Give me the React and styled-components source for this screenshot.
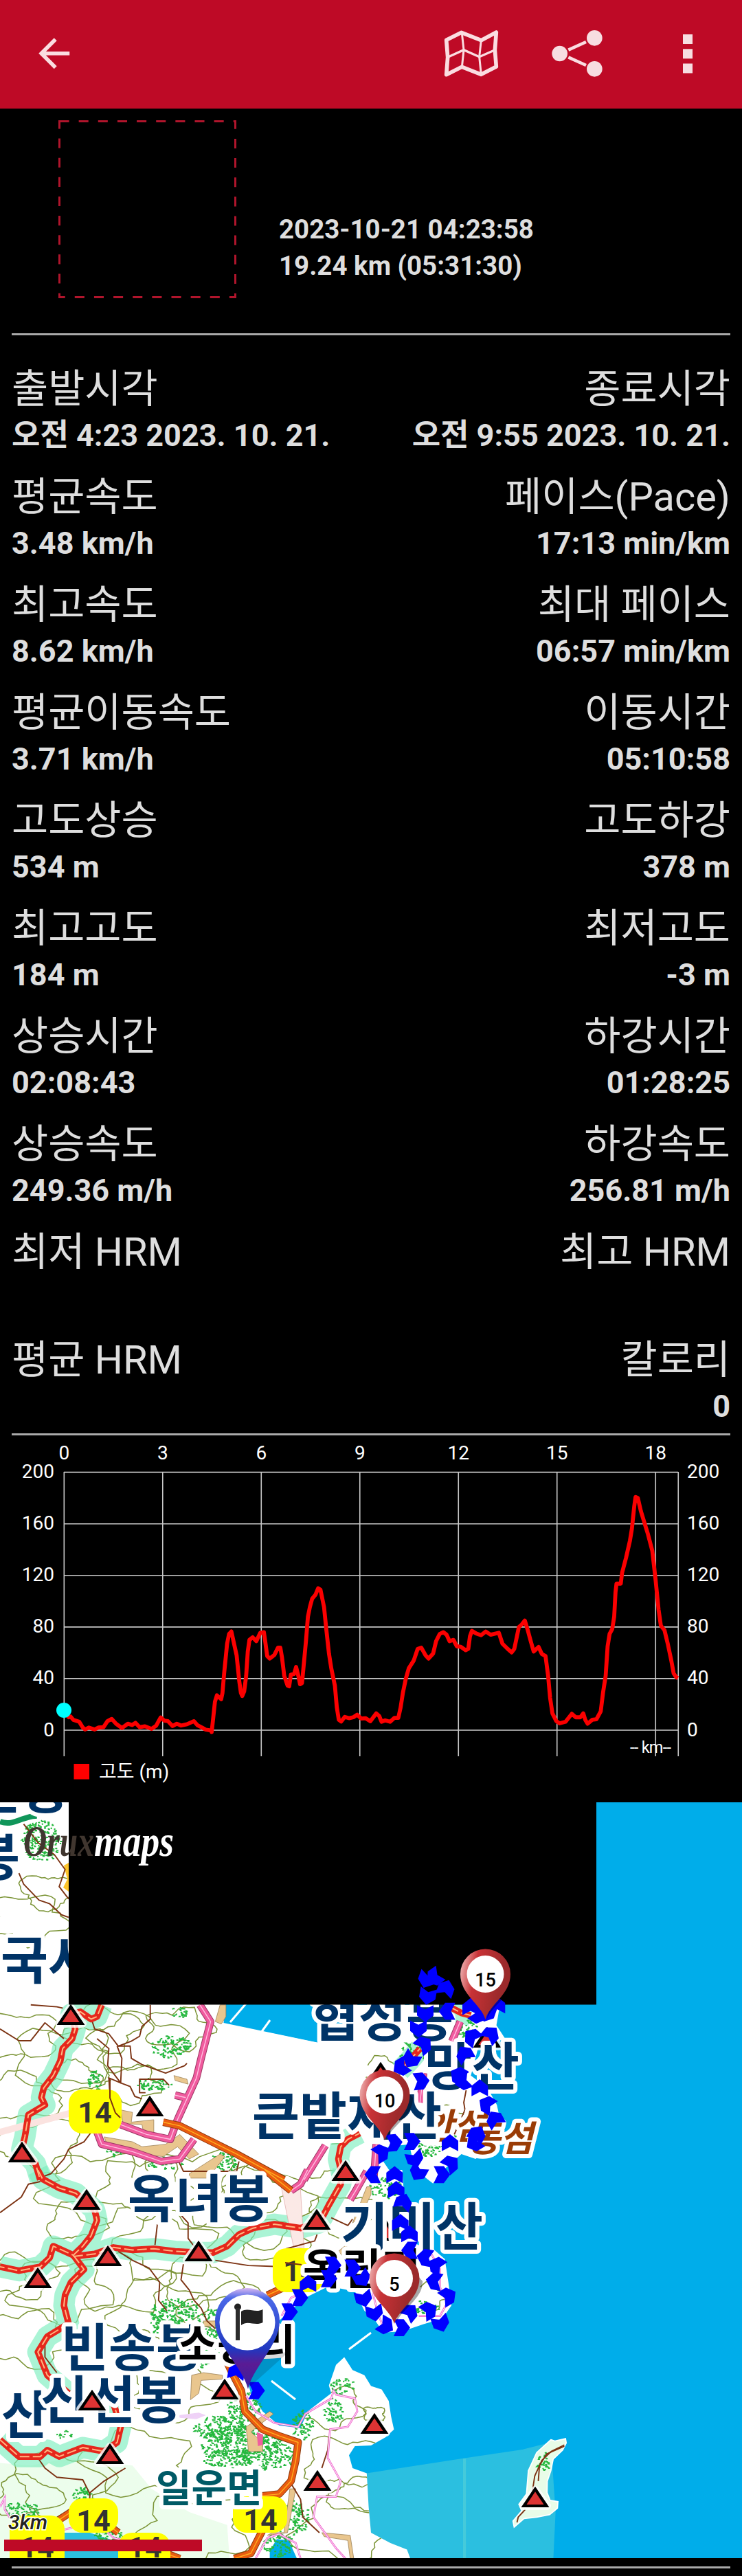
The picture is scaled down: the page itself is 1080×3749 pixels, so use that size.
import React from "react";
import styled, { createGlobalStyle } from "styled-components";

const GlobalStyle = createGlobalStyle`
  body {
    margin: 0;
    background-color: #000;
    font-family: Roboto, "Noto Sans CJK KR", sans-serif;
  }
`;

const Page = styled.div`
  width: 1080px;
  height: 3749px;
  overflow: hidden;
  background-color: #000;
  color: #dedede;
`;

const AppBar = styled.header`
  display: flex;
  align-items: center;
  box-sizing: border-box;
  height: 158px;
  padding: 0 72px 2px 45px;
  background-color: #be0a26;
`;

const Actions = styled.div`
  display: flex;
  align-items: center;
  gap: 77px;
  margin-left: auto;
`;

const IconButton = styled.button`
  display: flex;
  padding: 0;
  border: none;
  background: none;
  margin-right: ${(props) => props.$push || 0}px;
`;

const Summary = styled.section`
  display: flex;
  align-items: flex-end;
  box-sizing: border-box;
  height: 327px;
  padding: 0 85px 51px;
`;

const SummaryText = styled.p`
  margin: 0 0 22px 62px;
  font-size: 38.5px;
  font-weight: 700;
  line-height: 53px;
  height: 105px;
`;

const Divider = styled.hr`
  height: 3px;
  margin: 0 17px;
  border: none;
  background-color: #a9a9a9;
`;

const Stats = styled.section`
  display: flex;
  flex-direction: column;
  gap: 21px;
  padding: 45px 17px 4px;
`;

const StatRow = styled.div`
  display: flex;
  justify-content: space-between;
  height: 136px;
`;

const Stat = styled.div`
  text-align: ${(props) => (props.$end ? "right" : "left")};
`;

const StatLabel = styled.div`
  font-size: 57.8px;
  line-height: 66px;
`;

const StatValue = styled.div`
  font-size: 45px;
  font-weight: 700;
  line-height: 70px;
`;

const Chart = styled.svg`
  display: block;
  width: 1080px;
  height: 534px;
`;

const AxisText = styled.text`
  fill: #fff;
  font-size: ${(props) => props.$size || 28}px;
  text-anchor: ${(props) => props.$anchor || "start"};
`;

const Map = styled.svg`
  display: block;
  width: 1080px;
  height: 1100px;
`;

const PlaceName = styled.text`
  fill: ${(props) => props.$color || "#003366"};
  stroke: #fff;
  stroke-width: 12px;
  stroke-linejoin: round;
  paint-order: stroke;
  font-family: "Noto Sans CJK KR", sans-serif;
  font-weight: 700;
  font-size: ${(props) => props.$size || 75}px;
  font-style: ${(props) => (props.$italic ? "italic" : "normal")};
  text-anchor: ${(props) => props.$anchor || "start"};
`;

const RoadNumber = styled.text`
  fill: #333;
  font-size: 43px;
  font-weight: 700;
  text-anchor: middle;
`;

const PinText = styled.text`
  fill: #000;
  font-size: 27px;
  font-weight: 500;
  text-anchor: middle;
`;

const ScaleText = styled.text`
  fill: #222;
  stroke: #fff;
  stroke-width: 3px;
  paint-order: stroke;
  font-size: 30px;
  font-style: italic;
  font-weight: 500;
`;

const Logo = styled.text`
  font-family: "Liberation Serif", serif;
  font-size: 64px;
  font-weight: 700;
  font-style: italic;
`;

const Footer = styled.footer`
  padding-top: 12px;
`;

const STATS = [
  ["출발시각", "오전 4:23 2023. 10. 21.", "종료시각", "오전 9:55 2023. 10. 21."],
  ["평균속도", "3.48 km/h", "페이스(Pace)", "17:13 min/km"],
  ["최고속도", "8.62 km/h", "최대 페이스", "06:57 min/km"],
  ["평균이동속도", "3.71 km/h", "이동시간", "05:10:58"],
  ["고도상승", "534 m", "고도하강", "378 m"],
  ["최고고도", "184 m", "최저고도", "-3 m"],
  ["상승시간", "02:08:43", "하강시간", "01:28:25"],
  ["상승속도", "249.36 m/h", "하강속도", "256.81 m/h"],
  ["최저 HRM", "", "최고 HRM", ""],
  ["평균 HRM", "", "칼로리", "0"],
];

// distance (km), altitude (m)
const ALTITUDE = [
  [0, 14.6], [0.14, 10], [0.2, 10.5], [0.28, 8], [0.46, 6.5], [0.57, 2], [0.64, 0.5], [0.75, 2],
  [0.93, 0.5], [1.04, 2], [1.2, 2.3], [1.32, 7], [1.45, 8.7], [1.58, 5], [1.76, 1.7], [1.94, 5],
  [2.07, 4], [2.17, 5.7], [2.3, 2.3], [2.46, 3], [2.66, 1], [2.8, 3.4], [2.94, 9.9], [3.05, 7.4],
  [3.16, 7], [3.3, 3.2], [3.43, 5], [3.56, 3.6], [3.74, 4.6], [3.95, 7], [4.06, 3.8], [4.2, 2],
  [4.31, 0.4], [4.46, -0.2], [4.49, -1.5], [4.54, 10], [4.59, 22], [4.65, 27], [4.78, 24],
  [4.82, 29], [4.87, 44], [4.96, 67], [5.02, 74.6], [5.09, 76.5], [5.25, 58], [5.33, 38],
  [5.38, 29], [5.42, 26.5], [5.48, 30], [5.54, 42], [5.59, 61], [5.64, 70], [5.74, 72],
  [5.85, 69], [5.97, 75.5], [6.08, 76], [6.13, 67], [6.18, 57.5], [6.26, 55.5], [6.4, 58.4],
  [6.51, 64], [6.58, 64], [6.63, 56.5], [6.7, 42], [6.8, 34.6], [6.85, 34], [6.9, 43],
  [7, 43.6], [7.06, 49], [7.13, 42], [7.18, 35.6], [7.24, 36.5], [7.29, 50], [7.36, 69],
  [7.42, 88], [7.48, 95.5], [7.55, 102], [7.65, 105], [7.73, 110], [7.8, 109], [7.91, 95.5],
  [7.98, 78], [8.06, 59.4], [8.13, 48], [8.24, 34.6], [8.3, 17.5], [8.36, 8], [8.43, 6.7],
  [8.54, 10.3], [8.67, 9.3], [8.8, 10], [8.92, 12], [9.04, 9], [9.17, 9.3], [9.32, 6.9],
  [9.5, 13], [9.59, 11], [9.66, 6.5], [9.77, 7.6], [9.92, 6.5], [10.05, 9.5], [10.17, 9.5],
  [10.24, 17.5], [10.31, 29], [10.4, 40], [10.49, 48], [10.64, 54], [10.76, 63], [10.87, 64],
  [11, 58], [11.09, 55.5], [11.23, 59.4], [11.32, 69], [11.43, 74.6], [11.54, 76], [11.64, 74],
  [11.73, 69], [11.85, 70], [11.95, 65], [12.07, 64.7], [12.22, 62], [12.3, 63], [12.35, 72.7],
  [12.41, 77], [12.54, 75], [12.69, 73.6], [12.83, 76.5], [12.98, 74], [13.23, 75.5],
  [13.34, 67], [13.5, 63], [13.62, 60.3], [13.7, 63], [13.84, 80], [13.93, 82], [14.02, 85],
  [14.1, 78.4], [14.2, 69], [14.29, 61], [14.44, 64.5], [14.54, 59], [14.65, 57.5],
  [14.73, 42], [14.79, 25], [14.86, 13], [14.98, 7], [15.08, 5.3], [15.26, 6.5], [15.45, 12.7],
  [15.57, 10], [15.71, 10], [15.8, 13], [15.86, 8], [15.93, 5], [16.07, 8], [16.2, 8.4],
  [16.33, 14.6], [16.4, 29], [16.48, 42], [16.54, 65], [16.6, 74.6], [16.68, 78.4], [16.74, 88],
  [16.78, 107], [16.81, 113.6], [16.94, 113.6], [16.98, 122], [17.1, 133.6], [17.22, 147],
  [17.28, 156.4], [17.35, 173.5], [17.39, 180.8], [17.46, 180], [17.55, 170], [17.76, 152.6],
  [17.9, 139], [18, 116.5], [18.09, 93.6], [18.16, 81], [18.27, 77.5], [18.37, 67],
  [18.48, 53.7], [18.55, 44], [18.63, 41], [18.68, 40.3],
];

const kmToX = (km) => 93.3 + km * 47.83;
const mToY = (m) => 429 - m * 1.877;

// The map is drawn from two sheets, each with its own grid
const NORTH = "translate(0 -13) scale(0.3444 0.3571)";
const SOUTH = "translate(0 537) scale(0.3444 0.3757)";
const TRACK = "translate(380 237) scale(0.3333 0.3444)";

const LAND_NORTH =
  "M0 0H955V862L945 935 1340 1015 1450 1000 1450 862 2120 862 2108 890 2098 945 2135 1000 2020 1040 1990 1150 2060 1200 2100 1270 2118 1350 2080 1440 2010 1490 1950 1470 1880 1530 1830 1590 1790 1560 1745 1500 1730 1430 1640 1440 1620 1500 1690 1600H0Z";
const LAND_SOUTH =
  "M0-5H1700L1710 120 1740 280 1830 300 1880 340 1895 430 1908 520 1870 570 1790 592 1700 620 1620 625 1580 570 1540 540 1500 465 1390 445 1290 490 1190 570 1100 640 1040 790 1060 860 1110 930 1180 985 1270 995 1300 930 1400 860 1390 830 1420 750 1455 720 1490 770 1540 790 1568 832 1613 845 1643 890 1653 950 1665 1000 1630 1030 1568 1062 1500 1065 1475 1100 1490 1150 1550 1170 1558 1300 1568 1400 1650 1440 1720 1465 1738 1510H0Z";

const RIDGES = {
  north: [
    "M430 862L410 910 385 920 340 890 300 900 318 960 305 1000 265 1040 255 1090 225 1150 185 1200 175 1240 190 1270 120 1310 105 1400 92 1450 150 1510 170 1575",
    "M1450 1575L1430 1490 1440 1440 1470 1410 1520 1385",
    "M1900 870L1950 895 1990 905",
    "M1690 1130L1730 1090 1775 1040",
  ],
  south: [
    "M160-5L180 30 250 65 320 85 400 150 410 190 385 250 350 290 310 325 225 290 210 335 170 370 80 385 0 370",
    "M310 325L355 380 300 430 275 480 270 520 290 590 200 640 160 700 200 790 290 860",
    "M310 330L400 320 480 295 560 305 650 300 740 310 840 315 900 315 960 290 1010 245 1070 220 1160 205 1270 220 1350 200 1390 130 1440 50 1450-5",
    "M0 1040L80 1105 170 1105 200 1080 250 1105 350 1070 440 1085 495 1050 510 990 480 900",
  ],
};

const PINK_ROADS = {
  north: [
    "M845 862L890 930 850 1080 830 1160 750 1330 720 1410 620 1390 510 1350",
    "M410 1380L430 1430 560 1460 680 1500 760 1490 820 1410",
    "M740 1230L785 1240",
    "M1375 1435L1285 1575",
    "M1910 1010L1945 930",
    "M1580 1568L1590 1430",
    "M1790 1140L1775 1260",
  ],
  south: ["M1300-5L1270 50 1230 75", "M1480 110L1500 80 1550 0"],
};

const ORANGE_ROADS = {
  north: ["M690 1340L760 1355 1000 1470 1200 1575"],
  south: [
    "M1120-5L1230 75",
    "M1130 480L1200 450",
    "M950 720L980 780 1020 850 1035 930 1110 1000 1180 1025 1260 1050 1250 1120 1230 1200 1180 1250 1060 1262",
    "M1110 1390L1060 1480 990 1500",
    "M250 1350L300 1320 400 1330 500 1400",
    "M700 1480L760 1500",
  ],
};

const TRAILS = {
  north: [
    "M100 125L160 200 230 250 275 310 250 380 290 430",
    "M80 325L100 370 165 435 210 450 260 495 290 505",
    "M130 862L240 870 265 875",
    "M0 960L80 1008 130 1008 190 935 270 1000",
    "M390 930L400 960 460 980 500 1030 555 1010 590 990 600 950 635 920 635 862",
    "M410 1000L460 1040 455 1110 510 1180 460 1160 465 1240 480 1300 505 1325",
    "M495 1030L515 1080 510 1180 550 1195 570 1235 600 1245",
    "M500 1030L550 1030 555 1080 600 1105 700 1140 780 1110 790 1100",
    "M715 1190L690 1165 590 1165 590 1220 615 1220",
    "M390 1375L355 1420 290 1450 270 1490 215 1550 165 1568",
    "M755 1500L775 1540 1000 1540 1010 1500",
    "M1970 1210L1960 1260 1965 1290 1920 1390",
    "M1965 1300L1990 1360 1950 1380 1955 1430",
  ],
  south: [
    "M0 160L90 100 120 50 170 40",
    "M665 205L655 285",
    "M765 170L795 200 795 260 820 290",
    "M500 310L560 345 630 375 675 430 670 500 705 540",
    "M775 360L765 420 800 460 820 500 850 530 875 580 910 610",
    "M910 345L1050 365 1200 370 1270 380",
    "M1340 245L1330 270 1210 300 1205 370",
    "M1400 180L1470 210 1490 185",
    "M190 660L190 720 240 780",
    "M160 1110L190 1150 240 1185 350 1195 380 1250 375 1340",
    "M380 1245L440 1200 530 1150",
    "M1390 1030L1385 1080 1360 1150",
    "M1230 1210L1270 1270 1280 1340 1350 1400",
    "M2385 1060L2330 1085 2290 1120 2260 1180 2250 1240",
    "M2385 1065L2310 1095 2280 1140 2275 1200",
    "M2220 1310L2190 1340 2185 1360",
  ],
};

// narrow lanes drawn in pink without a casing
const LANES = [
  "M1040 870L1080 930 1160 975 1260 990 1290 940 1400 880 1410 850 1420 865 1500 880 1510 930 1470 990 1395 1000 1385 1110 1440 1200 1420 1260 1340 1260 1325 1340 1420 1460 1460 1500",
  "M180 1410L240 1395 330 1375 430 1378 480 1420 600 1450 660 1500",
  "M1080 1500L1130 1420 1180 1405 1250 1440 1270 1500",
  "M0 1300L20 1265 20 1310 40 1340",
  "M1190 560L1230 490 1300 460",
  "M1810 300L1860 380 1860 450 1890 510 1860 560 1770 560",
  "M1575 470L1600 560 1620 600",
];

const CONTOURS = [
  [40, 170, 48], [70, 130, 34], [30, 340, 46], [90, 370, 60], [150, 330, 44], [200, 350, 56],
  [260, 330, 40], [30, 430, 46], [110, 400, 30], [60, 500, 50], [140, 560, 66],
  [110, 610, 36], [210, 560, 56], [280, 560, 68], [370, 590, 70], [240, 650, 60],
  [180, 700, 56], [90, 710, 60], [30, 690, 42], [40, 780, 56], [230, 740, 58],
  [290, 700, 46], [330, 740, 52], [400, 640, 40], [250, 860, 50],
  [200, 960, 64], [90, 990, 60], [40, 1010, 40], [280, 1060, 66],
  [480, 880, 40], [500, 960, 48], [500, 1060, 60], [520, 1010, 34],
  [500, 600, 40], [460, 520, 34], [380, 560, 42], [555, 390, 26], [545, 890, 14],
  [650, 460, 22], [620, 720, 26], [190, 410, 36],
];

const WOODS = [
  [60, 55, 28, 30], [250, 355, 30, 16], [225, 410, 26, 10], [140, 405, 12, 16], [262, 305, 14, 8],
  [170, 505, 16, 10], [240, 525, 26, 8], [330, 520, 22, 14], [255, 740, 36, 18], [240, 760, 22, 16],
  [310, 770, 26, 34], [290, 800, 18, 24], [355, 880, 24, 22], [350, 930, 60, 26], [320, 910, 40, 18],
  [390, 950, 40, 20], [330, 955, 34, 14], [440, 905, 16, 22], [498, 850, 18, 12], [485, 885, 14, 18],
  [30, 1030, 26, 12], [120, 1010, 14, 16], [430, 1040, 20, 24], [405, 1080, 22, 18], [95, 920, 12, 6],
  [560, 560, 24, 14], [625, 500, 18, 14], [650, 490, 14, 10], [680, 330, 14, 14], [600, 365, 18, 16],
  [620, 735, 20, 10], [25, 240, 18, 10], [160, 1070, 24, 12], [790, 960, 10, 14],
];

const BUILDINGS = {
  north: [
    "M735 1150L790 1165 795 1185 740 1170Z",
    "M510 1290L560 1300 555 1340 650 1330 650 1400 610 1400 600 1350 520 1345Z",
    "M440 1400L560 1420 600 1440 700 1430 760 1390 840 1470 800 1490 750 1440 690 1480 560 1470 460 1450Z",
    "M800 1550L930 1470 950 1480 880 1568 800 1568Z",
    "M930 862L955 862 955 910 935 940 910 930Z",
  ],
  south: [
    "M860 580L910 580 910 600 860 600Z",
    "M810 790L860 780 940 790 940 805 850 810 840 860 805 885Z",
    "M1040 990L1140 930 1155 940 1060 1010 1110 1050 1110 1085 1050 1085Z",
    "M1225 1230L1250 1230 1215 1400 1130 1410 1150 1400 1200 1400Z",
    "M1360 1400L1480 1410 1495 1500 1480 1500 1470 1430 1370 1415Z",
    "M1490 200L1550 60 1568 60 1568 90 1520 180Z",
    "M1430 310L1470 280 1450 330Z",
  ],
};

const SHIELDS = [
  { x: 100, y: 418, w: 77, h: 64, tx: 138, ty: 466 },
  { x: 397, y: 649, w: 74, h: 64, tx: 437, ty: 697 },
  { x: 14, y: 1038, w: 80, h: 80, tx: 54, ty: 1099 },
  { x: 172, y: 1063, w: 76, h: 60, tx: 211, ty: 1099 },
  { x: 100, y: 1013, w: 72, h: 50, tx: 136, ty: 1060 },
  { x: 339, y: 1010, w: 79, h: 53, tx: 379, ty: 1059 },
];

const PEAKS = [
  [103, 324], [218, 457], [32, 524], [126, 593], [157, 675], [289, 668], [55, 707], [461, 622],
  [327, 869], [134, 885], [160, 963], [462, 1002], [545, 919], [779, 1026], [503, 551],
];
const HIDDEN_PEAKS = [[709, 357], [554, 408], [562, 638]];

// x, y and heading of every arrow along the recorded track
const ARROWS = [
  [722, 62, 200], [755, 52, 235], [808, 97, 20], [727, 132, 190], [717, 205, 180], [812, 195, 270],
  [687, 270, 180], [712, 335, 50], [655, 400, 210], [610, 432, 240], [700, 490, 85], [915, 175, 0],
  [950, 212, 120], [985, 205, 200], [1030, 168, 0], [920, 302, 310], [1005, 292, 40], [888, 375, 330],
  [860, 465, 300], [880, 492, 250], [955, 518, 0], [985, 588, 300], [1020, 650, 330], [945, 712, 30],
  [930, 752, 240], [825, 750, 0], [582, 750, 85], [660, 745, 90], [527, 792, 60], [672, 820, 160],
  [830, 838, 50], [790, 885, 90], [685, 877, 210], [487, 885, 270], [583, 885, 0], [590, 948, 0],
  [622, 1000, 20], [608, 1087, 0], [648, 1135, 0], [648, 1205, 270], [715, 1235, 280],
  [765, 1268, 300], [755, 1335, 280], [818, 1398, 60], [735, 1458, 60], [785, 1515, 160],
  [650, 1465, 40], [615, 1532, 90], [545, 1525, 120], [495, 1470, 170], [448, 1410, 165],
  [442, 1325, 150], [400, 1280, 90], [315, 1268, 90], [297, 1325, 90], [205, 1345, 0],
  [170, 1405, 90], [125, 1465, 90], [-19, 1798, 90], [-107, 1716, 10],
];

const random = (seed) => {
  let s = seed * 7919 + 17;
  return () => {
    s = (s * 16807) % 2147483647;
    return s / 2147483647;
  };
};

const contourPath = ([cx, cy, r]) => {
  const next = random(cx * 3 + cy);
  const steps = 44;
  const lobes = 3 + Math.floor(next() * 3);
  const phase = next() * 6;
  const points = [];
  for (let i = 0; i < steps; i += 1) {
    const angle = (i / steps) * Math.PI * 2;
    const far = 0.95 + Math.sin(angle * lobes + phase) * 0.2 + (next() - 0.5) * 0.14;
    const x = cx + Math.cos(angle) * r * far * 1.2;
    const y = cy + Math.sin(angle) * r * far * 0.75;
    points.push(`${x.toFixed(1)} ${y.toFixed(1)}`);
  }
  return `M${points.join("L")}Z`;
};

const woodPath = ([cx, cy, rx, ry]) => {
  const next = random(cx + cy * 5);
  const count = Math.round((rx * ry) / 5);
  let d = "";
  for (let i = 0; i < count; i += 1) {
    const angle = next() * Math.PI * 2;
    const far = Math.sqrt(next());
    const x = cx + Math.cos(angle) * rx * far;
    const y = cy + Math.sin(angle) * ry * far;
    d += `M${x.toFixed(1)} ${y.toFixed(1)}l${(next() * 4 - 2).toFixed(1)} ${(next() * 4 - 1).toFixed(1)} 2 0`;
  }
  return d;
};

const Lines = ({ layer, stroke, width, dash, opacity }) => (
  <>
    {[["north", NORTH], ["south", SOUTH]].map(([name, transform]) => (
      <g key={name} transform={transform} fill="none" opacity={opacity}>
        {layer[name].map((d) => (
          <path
            key={d}
            d={d}
            stroke={stroke}
            strokeWidth={width}
            strokeDasharray={dash}
            strokeLinejoin="round"
            vectorEffect="non-scaling-stroke"
          />
        ))}
      </g>
    ))}
  </>
);

const Peak = ({ at: [x, y] }) => (
  <g transform={`translate(${x} ${y})`}>
    <path d="M0-25L17-2H-17Z" fill="#fff" stroke="#fff" strokeWidth="12" opacity="0.8" strokeLinejoin="round" />
    <path d="M0-26.500L16.500-2H-16.500Z" fill="#dd3333" stroke="#000" strokeWidth="4.200" />
  </g>
);

const Pin = ({ x, y, children }) => (
  <g transform={`translate(${x} ${y})`}>
    <path d="M2 66C10 44 42 30 41 4L20-20Z" fill="#000" opacity="0.35" />
    <path
      d="M0 66C-6 44-36.5 30-36.5 0A36.5 36.5 0 1 1 36.5 0C36.5 30 6 44 0 66Z"
      fill="url(#pin)"
    />
    <circle r="27" fill="#fff" />
    <PinText y="18">{children}</PinText>
  </g>
);

const MapIcon = () => (
  <svg width="80" height="70" viewBox="75 69 240 210" fill="none" stroke="#fadde1">
    <path
      d="M86 115L152 82 238 116 304 81 298 158 304 231 238 265 154 232 86 266 92 190Z"
      strokeWidth="17"
      strokeLinejoin="round"
    />
    <path d="M154 85L162 158 154 233M238 116L230 188 238 265" strokeWidth="9" />
    <path d="M92 190L162 158 230 188 298 158" strokeWidth="10" />
  </svg>
);

const ShareIcon = () => (
  <svg width="74" height="70" viewBox="549 69 222 210" fill="#f7dde1">
    <circle cx="584" cy="174" r="34" />
    <circle cx="736" cy="106" r="34" />
    <circle cx="736" cy="241" r="34" />
    <path d="M622 158L699 123M622 190L699 225" stroke="#fadde1" strokeWidth="14" />
  </svg>
);

const AltitudeChart = () => (
  <Chart viewBox="0 0 1080 534">
    <g stroke="#c8c8c8" strokeWidth="1.6">
      {[0, 40, 80, 120, 160, 200].map((m) => (
        <line key={m} x1="93" x2="987" y1={mToY(m)} y2={mToY(m)} />
      ))}
      {[0, 3, 6, 9, 12, 15, 18, 18.69].map((km) => (
        <line key={km} x1={kmToX(km)} x2={kmToX(km)} y1="53" y2="467" />
      ))}
    </g>
    {[0, 3, 6, 9, 12, 15, 18].map((km) => (
      <AxisText key={km} x={kmToX(km)} y="35" $anchor="middle">
        {km}
      </AxisText>
    ))}
    {[0, 40, 80, 120, 160, 200].map((m) => (
      <React.Fragment key={m}>
        <AxisText x="79" y={mToY(m) + 8.5} $anchor="end">
          {m}
        </AxisText>
        <AxisText x="1000" y={mToY(m) + 8.5}>
          {m}
        </AxisText>
      </React.Fragment>
    ))}
    <AxisText x="917" y="462" $size="23.5" textLength="60">
      -- km--
    </AxisText>
    <polyline
      points={ALTITUDE.map(([km, m]) => `${kmToX(km)},${mToY(m)}`).join(" ")}
      fill="none"
      stroke="#fb0000"
      strokeWidth="5.8"
      strokeLinejoin="round"
    />
    <circle cx="93" cy="400" r="11" fill="#00ffff" />
    <rect x="107.5" y="478" width="22.5" height="22.5" fill="#ff0000" />
    <AxisText x="144" y="499">
      고도 (m)
    </AxisText>
  </Chart>
);

const TrackMap = () => (
  <Map viewBox="0 0 1080 1100">
    <defs>
      <clipPath id="land">
        <path d={LAND_NORTH} transform={NORTH} />
        <path d={LAND_SOUTH} transform={SOUTH} />
      </clipPath>
      <linearGradient id="pin" x1="0" y1="0.3" x2="0.8" y2="0.5">
        <stop offset="0" stopColor="#eba9a9" />
        <stop offset="0.35" stopColor="#c83236" />
        <stop offset="1" stopColor="#9c2a2b" />
      </linearGradient>
      <linearGradient id="start" x1="0" y1="0" x2="0" y2="1">
        <stop offset="0" stopColor="#d9b8f0" />
        <stop offset="0.1" stopColor="#4a68e8" />
        <stop offset="0.6" stopColor="#2038c0" />
        <stop offset="0.75" stopColor="#5a1b94" />
        <stop offset="1" stopColor="#3a20a0" />
      </linearGradient>
    </defs>

    <rect width="1080" height="1100" fill="#00adea" />
    <g transform={SOUTH}>
      <path d="M1540 1171L1958 1112 2208 1078 2328 1050 2348 1320 2338 1510H1540Z" fill="#2bbfe0" />
      <rect x="1957" y="1113" width="12" height="400" fill="#45cada" />
      <path d={LAND_SOUTH} fill="#fff" />
      <path
        d="M2328 1040L2345 1045 2390 1036 2393 1052 2378 1080 2338 1115 2328 1160 2313 1200 2312 1245 2325 1275 2358 1280 2356 1305 2323 1330 2268 1340 2215 1345 2173 1378 2168 1355 2205 1315 2193 1290 2225 1250 2233 1160 2268 1090Z"
        fill="#e8fce8"
        stroke="#fff"
        strokeWidth="5"
      />
      <path d="M0 1130L130 1140 300 1110 560 1140 640 1230 800 1320 960 1370 970 1500H0Z" fill="#ecfdec" />
      <path d="M255 1400L380 1400 480 1430 520 1500 270 1500Z" fill="#2bbfe0" />
      <path d="M1140 1470L1170 1425 1220 1430 1255 1500H1140Z" fill="#00adea" />
    </g>
    <path d={LAND_NORTH} transform={NORTH} fill="#fff" />

    <g clipPath="url(#land)">
      <g fill="none" stroke="#7b9436" strokeWidth="1.5">
        {CONTOURS.map((c) => (
          <path key={c.join()} d={contourPath(c)} />
        ))}
      </g>
      <path
        transform={NORTH}
        d="M945 938L1340 1015 1560 1060 1540 1200 1400 1430 1280 1575 1150 1540 770 1340 830 1160Z"
        fill="#fff"
      />
      <Lines layer={RIDGES} stroke="#7eefbf" width="31" opacity="0.65" />
    </g>
    <g fill="none" stroke="#25b83e" strokeWidth="2">
      {WOODS.map((w) => (
        <path key={w.join()} d={woodPath(w)} />
      ))}
    </g>
    <g transform={NORTH} fill="#e9c68e" stroke="#93774a" strokeWidth="2">
      {BUILDINGS.north.map((d) => (
        <path key={d} d={d} />
      ))}
    </g>
    <g transform={SOUTH} fill="#e9c68e" stroke="#93774a" strokeWidth="2">
      {BUILDINGS.south.map((d) => (
        <path key={d} d={d} />
      ))}
      <path d="M1180 20L1230 60 1270 70 1285 300 1240 290Z" fill="#fbe9e6" stroke="#e0a8a8" />
      <path d="M755 945L840 935 870 945 830 960 760 955Z" fill="#efd2f7" stroke="none" />
      <path d="M1085 1010L1112 1020 1110 1060 1090 1065Z" fill="#ef5f9f" stroke="none" />
    </g>
    <path d="M0 475L100 448 100 458 0 485Z" fill="#fbe3e0" />
    <path d="M0 28C20 36 36 18 54 20" fill="none" stroke="#10965a" strokeWidth="8" />
    <path d="M93 92L100 88V130L92 124 98 112Z" fill="#fdc52c" />
    <path d="M335 320L358 293M380 335L393 317M395 842L430 869M508 796L540 772" stroke="#fff" strokeWidth="3" />
    <Lines layer={TRAILS} stroke="#7c3313" width="1.9" />
    <Lines layer={RIDGES} stroke="#e6271c" width="9.5" />
    <Lines layer={RIDGES} stroke="#ffb681" width="2" dash="14 5" />
    <Lines layer={PINK_ROADS} stroke="#9c3864" width="11" />
    <Lines layer={PINK_ROADS} stroke="#f05a9e" width="9" />
    <Lines layer={PINK_ROADS} stroke="#ffc0e0" width="1.4" />
    <Lines layer={ORANGE_ROADS} stroke="#8c3a10" width="11" />
    <Lines layer={ORANGE_ROADS} stroke="#ea5c10" width="9" />
    <Lines layer={ORANGE_ROADS} stroke="#ffb020" width="1.4" />
    <g transform={SOUTH} fill="none" stroke="#f06cd0">
      {LANES.map((d) => (
        <path key={d} d={d} strokeWidth="8" />
      ))}
    </g>
    <g transform={SOUTH} fill="none" stroke="#fff">
      {LANES.map((d) => (
        <path key={d} d={d} strokeWidth="2.5" />
      ))}
    </g>

    {SHIELDS.map((s) => (
      <g key={`${s.x}-${s.y}`}>
        <rect x={s.x} y={s.y} width={s.w} height={s.h} rx="20" fill="#ffff00" />
        <RoadNumber x={s.tx} y={s.ty}>
          14
        </RoadNumber>
      </g>
    ))}
    <path
      d="M160 402V430L168 452 175 459M415 670L439 673"
      fill="none"
      stroke="#7c3313"
      strokeWidth="2"
    />

    {HIDDEN_PEAKS.map((p) => (
      <Peak key={p.join()} at={p} />
    ))}
    <PlaceName x="612" y="490" $size="52" $color="#9a3c06" $italic>
      안섬
    </PlaceName>
    <PlaceName x="680" y="508" $size="52" $color="#9a3c06" $italic>
      동섬
    </PlaceName>
    <PlaceName x="101" y="9" $anchor="end">
      산봉
    </PlaceName>
    <PlaceName x="29" y="107" $anchor="end">
      봉
    </PlaceName>
    <PlaceName x="1" y="257">
      국사
    </PlaceName>
    <PlaceName x="453" y="341">
      협성봉
    </PlaceName>
    <PlaceName x="618" y="412">
      망산
    </PlaceName>
    <PlaceName x="367" y="484">
      큰밭재산
    </PlaceName>
    <PlaceName x="186" y="604">
      옥녀봉
    </PlaceName>
    <PlaceName x="496" y="645">
      기미산
    </PlaceName>
    <PlaceName x="441" y="702" $size="62" $color="#000">
      옥림리
    </PlaceName>
    <PlaceName x="89" y="821">
      빈송봉
    </PlaceName>
    <PlaceName x="259" y="812" $size="62" $color="#000">
      소동리
    </PlaceName>
    <PlaceName x="2" y="919">
      산
    </PlaceName>
    <PlaceName x="59" y="897">
      신선봉
    </PlaceName>
    <PlaceName x="227" y="1018" $size="56" $color="#005a66">
      일운면
    </PlaceName>
    {PEAKS.map((p) => (
      <Peak key={p.join()} at={p} />
    ))}

    <rect x="100" y="0" width="768" height="294.5" fill="#000" />

    <g transform={TRACK} fill="#0000ff">
      {ARROWS.map(([x, y, heading]) => (
        <path
          key={`${x}-${y}`}
          d="M0-36L36-8V36L0 18-36 36V-8Z"
          transform={`translate(${x} ${y}) rotate(${heading})`}
        />
      ))}
    </g>

    <Pin x={706.5} y={250}>
      15
    </Pin>
    <Pin x={560} y={426}>
      10
    </Pin>
    <Pin x={574} y={693}>
      5
    </Pin>

    <g>
      <path d="M362 852L372 805 420 800Z" fill="#000" opacity="0.15" />
      <path
        d="M361 854C354 822 313 790 313 755A47 48 0 1 1 407 755C407 790 368 822 361 854Z"
        fill="url(#start)"
      />
      <circle cx="360" cy="757" r="40.5" fill="#fff" />
      <circle cx="346" cy="734.5" r="5" fill="#222" />
      <rect x="343" y="736" width="6" height="47" fill="#2c2c2c" />
      <path d="M351 741C361 734 371 744 382.5 738V757C371 763 361 753 351 761Z" fill="#222" />
    </g>

    <Logo x="34" y="78" fill="#40362f" textLength="103" lengthAdjust="spacingAndGlyphs">
      Orux
    </Logo>
    <Logo x="137" y="78" fill="#fff" textLength="116" lengthAdjust="spacingAndGlyphs">
      maps
    </Logo>
    <ScaleText x="12" y="1058">
      3km
    </ScaleText>
    <rect x="6" y="1073" width="288" height="17" fill="#be0a26" />
  </Map>
);

const App = () => {
  return (
    <>
      <GlobalStyle />
      <Page>
        <AppBar>
          <IconButton aria-label="Back">
            <svg width="67.5" height="67.5" viewBox="0 0 24 24" fill="#fadde1">
              <path d="M20 11H7.8l5.6-5.6L12 4l-8 8 8 8 1.4-1.4L7.8 13H20v-2z" />
            </svg>
          </IconButton>
          <Actions>
            <IconButton aria-label="Map">
              <MapIcon />
            </IconButton>
            <IconButton aria-label="Share" $push={40}>
              <ShareIcon />
            </IconButton>
            <IconButton aria-label="More">
              <svg width="14" height="57" viewBox="0 0 14 57" fill="#f7dde1">
                <rect width="14" height="14" />
                <rect y="21.3" width="14" height="14" />
                <rect y="42.5" width="14" height="14" />
              </svg>
            </IconButton>
          </Actions>
        </AppBar>

        <Summary>
          <svg width="259" height="259" fill="none">
            <rect
              x="1.5"
              y="1.5"
              width="256"
              height="256"
              stroke="#b0152c"
              strokeWidth="3"
              strokeDasharray="14.07 14.07"
            />
          </svg>
          <SummaryText>
            2023-10-21 04:23:58
            <br />
            19.24 km (05:31:30)
          </SummaryText>
        </Summary>
        <Divider />

        <Stats>
          {STATS.map(([label, value, endLabel, endValue]) => (
            <StatRow key={label}>
              <Stat>
                <StatLabel>{label}</StatLabel>
                <StatValue>{value}</StatValue>
              </Stat>
              <Stat $end>
                <StatLabel>{endLabel}</StatLabel>
                <StatValue>{endValue}</StatValue>
              </Stat>
            </StatRow>
          ))}
        </Stats>
        <Divider />

        <AltitudeChart />
        <TrackMap />
        <Footer>
          <Divider />
        </Footer>
      </Page>
    </>
  );
};

export default App;
